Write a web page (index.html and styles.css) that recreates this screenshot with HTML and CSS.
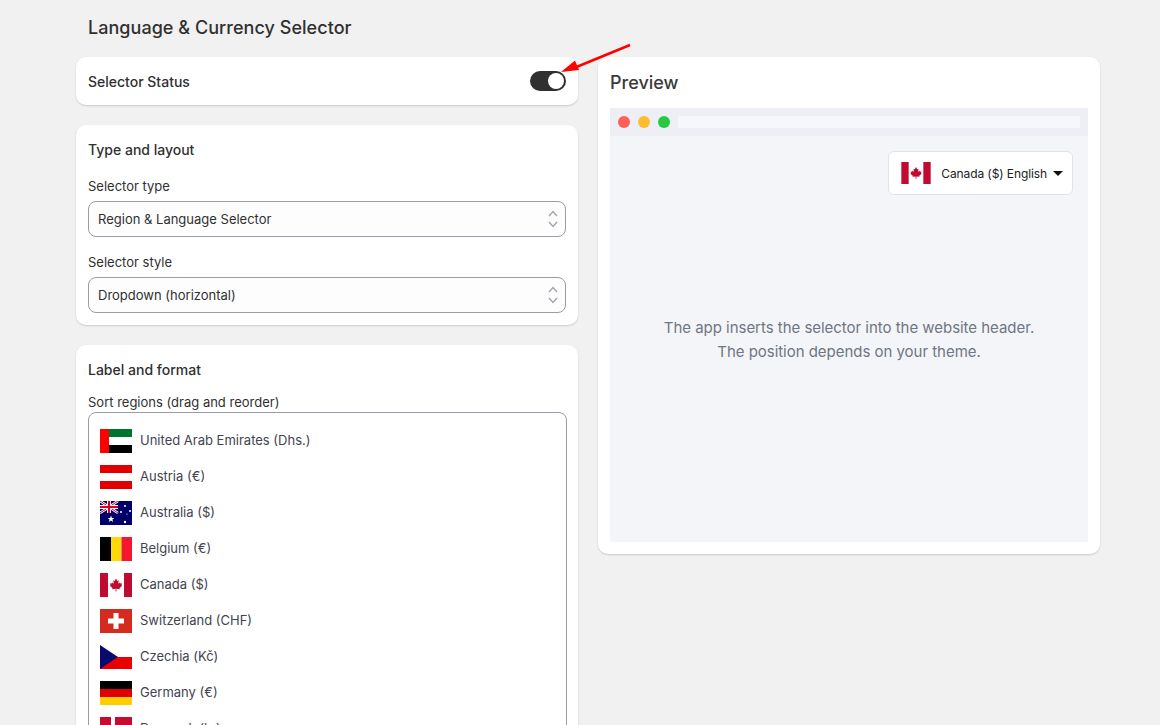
FILE: index.html
```html
<!DOCTYPE html>
<html lang="en">
<head>
<meta charset="UTF-8">
<meta name="viewport" content="width=device-width, initial-scale=1.0">
<title>Language &amp; Currency Selector</title>
<link rel="stylesheet" href="styles.css">
</head>
<body>

<div class="page">
  <h1 class="page-title">Language &amp; Currency Selector</h1>

  <div class="columns">
    <div class="column">
      <div class="card status-card">
        <span class="status-label">Selector Status</span>
        <span class="toggle"><span class="toggle-knob"></span></span>
      </div>

      <div class="card">
        <h3 class="card-title">Type and layout</h3>
        <div class="field-label first-label">Selector type</div>
        <div class="select">
          <span>Region &amp; Language Selector</span>
          <svg class="select-arrows" width="10" height="20" viewBox="0 0 10 20"><path d="M1 7 5 2.500 9 7M1 13 5 17.500 9 13"/></svg>
        </div>
        <div class="field-label">Selector style</div>
        <div class="select">
          <span>Dropdown (horizontal)</span>
          <svg class="select-arrows" width="10" height="20" viewBox="0 0 10 20"><path d="M1 7 5 2.500 9 7M1 13 5 17.500 9 13"/></svg>
        </div>
      </div>

      <div class="card list-card">
        <h3 class="card-title">Label and format</h3>
        <div class="sort-label">Sort regions (drag and reorder)</div>
        <div class="region-list">
          <div class="region">
            <svg class="flag" viewBox="0 0 32 24"><rect width="32" height="8" fill="#00732f"/><rect y="8" width="32" height="8" fill="#fff"/><rect y="16" width="32" height="8" fill="#000"/><rect width="9" height="24" fill="#f00"/></svg>
            <span class="region-name">United Arab Emirates (Dhs.)</span>
          </div>
          <div class="region">
            <svg class="flag" viewBox="0 0 32 24"><rect width="32" height="24" fill="#fff"/><rect width="32" height="8" fill="#e00000"/><rect y="16" width="32" height="8" fill="#e00000"/></svg>
            <span class="region-name">Austria (€)</span>
          </div>
          <div class="region">
            <svg class="flag" viewBox="0 0 32 24"><rect width="32" height="24" fill="#00006a"/><path d="M0 0 18 12M18 0 0 12" stroke="#fff" stroke-width="2.600"/><path d="M0 0 18 12M18 0 0 12" stroke="#d3002a" stroke-width="1"/><path d="M9 0V12M0 6H18" stroke="#fff" stroke-width="4"/><path d="M9 0V12M0 6H18" stroke="#d3002a" stroke-width="2.200"/><path d="M11 14.500 11.900 17 14.400 17 12.400 18.600 13.100 21 11 19.600 8.900 21 9.600 18.600 7.600 17 10.100 17Z" fill="#fff"/><g fill="#fff"><circle cx="25" cy="5" r="1"/><circle cx="30" cy="10" r="1"/><circle cx="21" cy="11" r="1"/><circle cx="25" cy="21" r="1.200"/><circle cx="27" cy="13" r=".6"/></g></svg>
            <span class="region-name">Australia ($)</span>
          </div>
          <div class="region">
            <svg class="flag" viewBox="0 0 32 24"><rect width="11" height="24" fill="#000"/><rect x="11" width="10.500" height="24" fill="#ffd90c"/><rect x="21.500" width="10.500" height="24" fill="#f31830"/></svg>
            <span class="region-name">Belgium (€)</span>
          </div>
          <div class="region">
            <svg class="flag" viewBox="0 0 32 24"><rect width="32" height="24" fill="#fff"/><rect width="8" height="24" fill="#c10a30"/><rect x="24" width="8" height="24" fill="#c10a30"/><path d="M16 5.500 17.300 8 18.800 7.300 18.200 10.800 19.800 9.400 20.300 10.600 22 10.300 21.400 12.300 22.200 12.800 19.500 15 19.800 16.200 16.400 15.800 16.400 18.500H15.600L15.600 15.800 12.200 16.200 12.500 15 9.800 12.800 10.600 12.300 10 10.300 11.700 10.600 12.200 9.400 13.800 10.800 13.200 7.300 14.700 8Z" fill="#c10a30"/></svg>
            <span class="region-name">Canada ($)</span>
          </div>
          <div class="region">
            <svg class="flag" viewBox="0 0 32 24"><rect width="32" height="24" fill="#d52b1e"/><path d="M13.500 4H18.500V9.500H24V14.500H18.500V20H13.500V14.500H8V9.500H13.500Z" fill="#fff"/></svg>
            <span class="region-name">Switzerland (CHF)</span>
          </div>
          <div class="region">
            <svg class="flag" viewBox="0 0 32 24"><rect width="32" height="12" fill="#fff"/><rect y="12" width="32" height="12" fill="#ea0000"/><path d="M0 0 18 12 0 24Z" fill="#0a0a6e"/></svg>
            <span class="region-name">Czechia (Kč)</span>
          </div>
          <div class="region">
            <svg class="flag" viewBox="0 0 32 24"><rect width="32" height="8" fill="#000"/><rect y="8" width="32" height="8" fill="#e00000"/><rect y="16" width="32" height="8" fill="#ffce00"/></svg>
            <span class="region-name">Germany (€)</span>
          </div>
          <div class="region">
            <svg class="flag" viewBox="0 0 32 24"><rect width="32" height="24" fill="#c60c30"/><rect x="11" width="4" height="24" fill="#fff"/><rect y="10" width="32" height="4" fill="#fff"/></svg>
            <span class="region-name">Denmark (kr)</span>
          </div>
        </div>
      </div>
    </div>

    <div class="column">
      <div class="card preview-card">
        <h2 class="preview-title">Preview</h2>
        <div class="browser">
          <div class="browser-bar">
            <span class="dot dot-red"></span>
            <span class="dot dot-yellow"></span>
            <span class="dot dot-green"></span>
            <span class="address"></span>
          </div>
          <div class="browser-body">
            <div class="browser-top">
              <div class="picker">
                <svg class="picker-flag" viewBox="0 0 32 24"><rect width="32" height="24" fill="#fff"/><rect width="8" height="24" fill="#c10a30"/><rect x="24" width="8" height="24" fill="#c10a30"/><path d="M16 5.500 17.300 8 18.800 7.300 18.200 10.800 19.800 9.400 20.300 10.600 22 10.300 21.400 12.300 22.200 12.800 19.500 15 19.800 16.200 16.400 15.800 16.400 18.500H15.600L15.600 15.800 12.200 16.200 12.500 15 9.800 12.800 10.600 12.300 10 10.300 11.700 10.600 12.200 9.400 13.800 10.800 13.200 7.300 14.700 8Z" fill="#c10a30"/></svg>
                <span>Canada ($) English</span>
                <span class="caret"></span>
              </div>
            </div>
            <p class="preview-note">The app inserts the selector into the website header.<br>The position depends on your theme.</p>
          </div>
        </div>
      </div>
    </div>
  </div>

  <!-- annotation arrow drawn over the toggle -->
  <svg class="arrow" width="80" height="40" viewBox="0 0 80 40">
    <path d="M70 3 14 26" stroke="#f00" stroke-width="2.500" fill="none"/>
    <path d="M1 30 15 18.500 19 28Z" fill="#f00"/>
  </svg>
</div>

</body>
</html>
```

FILE: styles.css
```css
html, body {
  height: 100%;
}
body {
  font-family: Inter, "Noto Sans", sans-serif;
  margin: 0;
  padding: 0;
  background-color: #f1f1f1;
  color: #303030;
  overflow: hidden;
}
.page {
  position: relative;
  width: 1024px;
  margin-left: 76px;
}
.page-title {
  margin: 0;
  padding: 17px 12px 0;
  height: 40px;
  font-size: 18px;
  line-height: 22px;
  font-weight: 500;
  letter-spacing: 0.04px;
  color: #303030;
}
.columns {
  display: flex;
  gap: 20px;
  align-items: flex-start;
}
.column {
  width: 502px;
  display: flex;
  flex-direction: column;
  gap: 20px;
}
.card {
  background-color: #fff;
  border-radius: 10px;
  box-shadow: 0 1px 2px rgba(0, 0, 0, 0.16);
  padding: 12px;
}
.status-card {
  height: 48px;
  box-sizing: border-box;
  display: flex;
  align-items: center;
  justify-content: space-between;
}
.status-label {
  font-size: 14px;
  line-height: 20px;
  font-weight: 500;
  padding-top: 1px;
}
.toggle {
  width: 36px;
  height: 20px;
  border-radius: 10px;
  background-color: #303030;
  display: flex;
  align-items: center;
  justify-content: flex-end;
  padding-right: 2px;
  box-sizing: border-box;
}
.toggle-knob {
  width: 16px;
  height: 16px;
  border-radius: 50%;
  background-color: #fff;
}
.card-title {
  margin: 0;
  font-size: 14px;
  line-height: 26px;
  font-weight: 500;
}
.field-label {
  font-size: 13px;
  line-height: 16px;
  margin: 17px 0 7px;
}
.first-label {
  margin-top: 15px;
}
.select {
  height: 36px;
  box-sizing: border-box;
  border: 1px solid #9a9da8;
  border-radius: 8px;
  background-color: #fdfdfd;
  padding: 0 9px;
  font-size: 13px;
  display: flex;
  align-items: center;
  justify-content: space-between;
}
.select-arrows {
  fill: none;
  stroke: #a2a5ae;
  stroke-width: 1.400;
  margin-right: -2px;
}
.list-card {
  height: 600px;
}
.sort-label {
  font-size: 13px;
  line-height: 16px;
  margin-top: 11px;
}
.region-list {
  width: 479px;
  box-sizing: border-box;
  border: 1px solid #9a9da8;
  border-radius: 8px;
  margin-top: 2px;
  padding: 10px 11px;
}
.region {
  display: flex;
  align-items: center;
  gap: 8px;
  height: 36px;
  font-size: 13px;
  color: #3f4450;
}
.region-name {
  padding-bottom: 2px;
}
.flag {
  width: 32px;
  height: 24px;
  flex: none;
}
.preview-card {
  height: 497px;
  box-sizing: border-box;
}
.preview-title {
  margin: 0;
  font-size: 18px;
  line-height: 28px;
  font-weight: 500;
  color: #3a3a3a;
  height: 39px;
}
.browser {
  background-color: #f4f5f8;
  height: 434px;
}
.browser-bar {
  height: 28px;
  background-color: #edeff5;
  display: flex;
  align-items: center;
  gap: 8px;
  padding: 0 8px;
}
.dot {
  width: 12px;
  height: 12px;
  border-radius: 50%;
}
.dot-red {
  background-color: #ff5f57;
}
.dot-yellow {
  background-color: #febc2e;
}
.dot-green {
  background-color: #28c840;
}
.address {
  flex: 1;
  height: 12px;
  border-radius: 2px;
  background-color: #f6f7fa;
}
.browser-top {
  display: flex;
  justify-content: flex-end;
  padding: 15px 15px 0;
}
.picker {
  display: flex;
  align-items: center;
  height: 44px;
  box-sizing: border-box;
  padding: 0 9px 0 12px;
  background-color: #fff;
  border: 1px solid #e1e3e8;
  border-radius: 6px;
  font-size: 12px;
  letter-spacing: -0.1px;
  color: #222;
}
.picker-flag {
  width: 30px;
  height: 22px;
  margin-right: 10px;
}
.caret {
  margin-left: 6px;
  border-left: 5px solid transparent;
  border-right: 5px solid transparent;
  border-top: 5px solid #111;
}
.preview-note {
  margin: 121px 0 0;
  text-align: center;
  font-size: 15px;
  line-height: 24px;
  letter-spacing: -0.03px;
  color: #6f7582;
}
.arrow {
  position: absolute;
  left: 484px;
  top: 42px;
}
```
